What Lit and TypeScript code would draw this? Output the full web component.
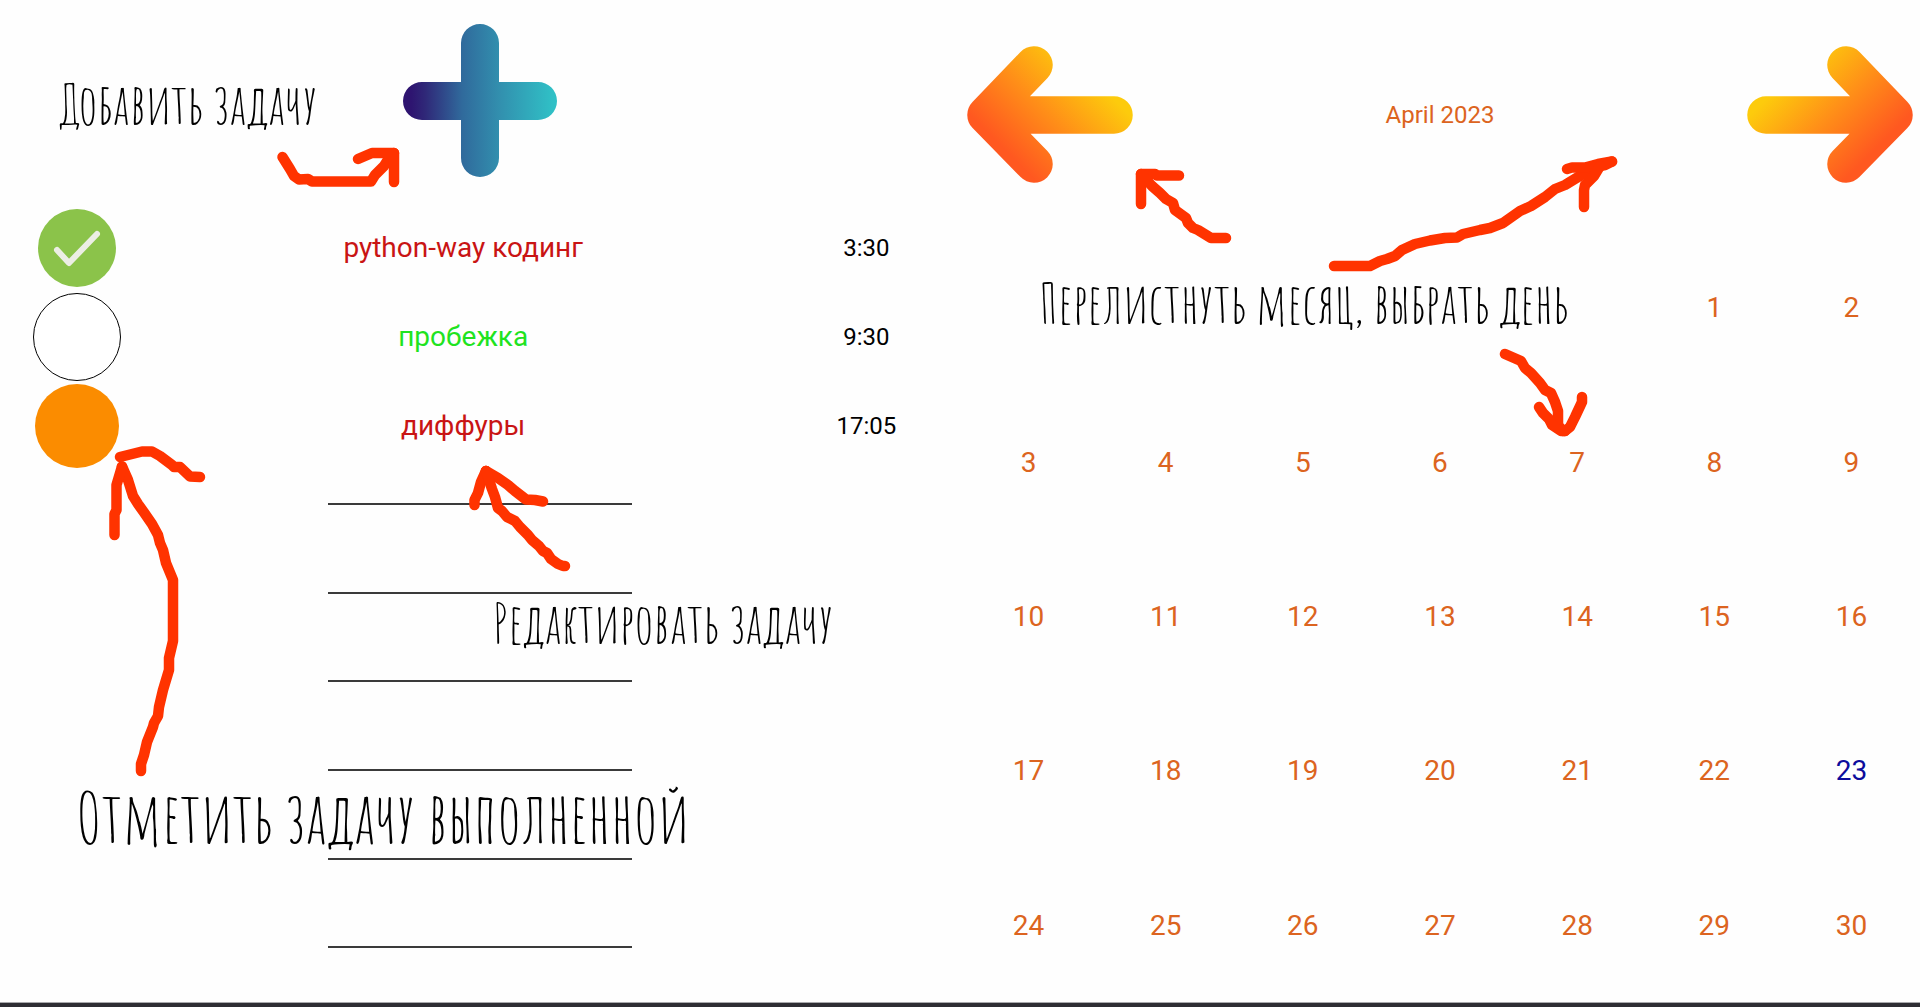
import { LitElement, html, svg, css, nothing } from "lit";
import { customElement, state } from "lit/decorators.js";
import { classMap } from "lit/directives/class-map.js";
import { styleMap } from "lit/directives/style-map.js";

interface Task {
  title: string;
  time: string;
  tone: "red" | "green";
  mark: "done" | "open" | "pending";
}

interface Note {
  text: string;
  x: number;
  y: number;
  large?: boolean;
}

const TASKS: Task[] = [
  { title: "python-way кодинг", time: "3:30", tone: "red", mark: "done" },
  { title: "пробежка", time: "9:30", tone: "green", mark: "open" },
  { title: "диффуры", time: "17:05", tone: "red", mark: "pending" },
];

const EMPTY_ROWS = 6;
const FIRST_WEEKDAY = 5;
const DAYS_IN_MONTH = 30;
const TODAY = 23;

/* Canvas on which the hand-drawn notes are placed. */
const CANVAS_W = 1920;
const CANVAS_H = 1007;

const NOTES: Note[] = [
  { text: "Добавить задачу", x: 60, y: 68 },
  { text: "Редактировать задачу", x: 493, y: 587 },
  { text: "Отметить задачу выполненной", x: 76, y: 772, large: true },
  { text: "Перелистнуть месяц, выбрать день", x: 1039, y: 267 },
];

const STROKES: string[] = [
  // add task
  "282.5,157 290,169 294,176 299,179.5 308,179 312,181.5 371,181.5 375,175 384,166 389,158 394,153",
  "358,159 372,153 394,153 394,182",
  // mark as done
  "120,457 142,451.5 152,451.5 160,456 172,465 174,467 180,467 190,476.5 200,477",
  "122,466.5 128,480 133,496 138,504 143,511 152,524 158,535 160,543 163,550 166,563 173,580 173,641 169,658 169,670 163,690 159,707 158,716 154,723 153,727 147,742 144,755 141,764 141,771",
  "122,466.5 116.5,485 116.5,510 114.5,514 114.5,535",
  // edit task
  "486,471 498,478 508,485 515,491 526,499.5 535,500 543,501.5",
  "486,471 481,482 478,493 474.5,500 474.5,505",
  "486,471 492,489 495,497 498,508 502,511 507,517 515,521 520,527 528,535 532,540 539,546 543,551 547,553 551,559 558,564 563,566 565,566",
  // previous month
  "1179,175.5 1157,175.5 1155,174 1141,174 1141,204",
  "1141,174 1152,186 1160,193 1166,199 1173,203 1175,210 1186,218 1188,223 1193,228 1198,230 1211,238 1226,238",
  // next month
  "1334,266 1370,266 1380,261 1387,259 1395,256 1402,250 1415,244 1430,240.5 1445,238 1457,237.5 1463,234 1480,230 1490,228 1503,223 1520,211 1531,206 1545,197 1555,189 1565,185 1583,174 1600,166 1605,165 1612,161.5",
  "1567,169 1572,167.5 1585,167.5 1598,164 1612,161.5",
  "1600,166 1594,176 1585,185 1584,190 1584,207",
  // pick a day
  "1505,354 1521,361 1525,368 1531,373 1540,383 1545,390 1551,393 1555,402 1558,411 1558,425 1563,431",
  "1539,407 1543,413 1549,419 1552,425 1561,431 1565,431",
  "1582,397 1582,402 1575,417 1570,427 1565,431",
];

@customElement("app-root")
export class AppRoot extends LitElement {
  static styles = css`
    :host {
      display: block;
      font-family: Roboto, "Noto Sans", sans-serif;
      color: #000;
    }
    *,
    *::before,
    *::after {
      box-sizing: border-box;
    }
    button {
      border: 0;
      padding: 0;
      margin: 0;
      background: none;
      font: inherit;
      color: inherit;
      cursor: pointer;
    }
    svg {
      display: block;
    }
    .page {
      position: relative;
      min-height: 100vh;
      display: flex;
      flex-direction: column;
      background: #fefefe;
    }
    .panes {
      flex: 1;
      display: grid;
      grid-template-columns: 1fr 1fr;
    }
    .tasks,
    .calendar {
      display: flex;
      flex-direction: column;
    }
    .toolbar {
      height: 204px;
      display: flex;
      justify-content: center;
      align-items: flex-start;
      padding-top: 24px;
    }
    .list {
      flex: 1;
      margin: 0;
      padding: 0;
      list-style: none;
      display: grid;
      grid-auto-rows: 1fr;
    }
    .task {
      display: grid;
      grid-template-columns: 32fr 129fr 39fr;
      align-items: center;
      justify-items: center;
    }
    .blank {
      display: flex;
      justify-content: center;
      align-items: flex-start;
    }
    .title {
      font-size: 28px;
      line-height: 32px;
    }
    .red {
      color: #c91414;
    }
    .green {
      color: #1fe31f;
    }
    .time {
      font-size: 24px;
      line-height: 32px;
    }
    .mark {
      display: grid;
      place-items: center;
    }
    .mark > * {
      grid-area: 1 / 1;
    }
    .box {
      appearance: none;
      margin: 0;
      border-radius: 50%;
    }
    .done {
      width: 78px;
      height: 78px;
      background: #8bc34a;
    }
    .open {
      width: 88px;
      height: 88px;
      border: 1px solid #000;
      background: #fff;
    }
    .pending {
      width: 84px;
      height: 84px;
      background: #fb8c00;
    }
    .tick {
      pointer-events: none;
    }
    .entry {
      width: 304px;
      height: 35px;
      padding: 0;
      border: 0;
      border-bottom: 2px solid #3a3a3a;
      border-radius: 0;
      outline: 0;
      background: none;
      font: inherit;
      font-size: 24px;
      text-align: center;
    }
    .head {
      height: 230px;
      padding: 0 7px;
      display: flex;
      justify-content: space-between;
      align-items: center;
    }
    .month {
      margin: 0;
      font-size: 24px;
      line-height: 32px;
      font-weight: 400;
      color: #dc6420;
    }
    .days {
      flex: 1;
      display: grid;
      grid-template-columns: repeat(7, 1fr);
      grid-auto-rows: 1fr;
      font-size: 28px;
      line-height: 32px;
      color: #dc6420;
    }
    .day {
      padding-top: 2px;
    }
    .today {
      color: #0c0c9c;
    }
    .bar {
      height: 5px;
      border-top: 1px solid #a9a9ac;
      background: #2e2d33;
    }
    .overlay {
      position: absolute;
      inset: 0;
      pointer-events: none;
    }
    .ink {
      width: 100%;
      height: 100%;
      fill: none;
      stroke: #ff3300;
      stroke-width: 10.5;
      stroke-linecap: round;
      stroke-linejoin: round;
    }
    .note {
      position: absolute;
      margin: 0;
      font-family: "Amatic SC", "Roboto Condensed", sans-serif;
      font-size: 56px;
      line-height: 72px;
      white-space: nowrap;
    }
    .large {
      font-size: 70px;
      line-height: 90px;
    }
  `;

  @state() private marks: boolean[] = TASKS.map((t) => t.mark === "done");

  private toggle(index: number) {
    this.marks = this.marks.map((m, i) => (i === index ? !m : m));
  }

  private plusIcon() {
    return html`<svg width="154" height="154" viewBox="0 0 154 154" aria-hidden="true">
      <defs>
        <linearGradient id="plus" gradientUnits="userSpaceOnUse" x1="8" y1="0" x2="150" y2="0">
          <stop offset="0" stop-color="#2e1470" />
          <stop offset="0.1" stop-color="#2f2878" />
          <stop offset="0.36" stop-color="#306a9c" />
          <stop offset="0.62" stop-color="#328fae" />
          <stop offset="1" stop-color="#30c0c6" />
        </linearGradient>
      </defs>
      <path
        fill="url(#plus)"
        d="M58 19a19 19 0 0 1 38 0V58h39a19 19 0 0 1 0 38H96v38a19 19 0 0 1-38 0V96H19a19 19 0 0 1 0-38H58z"
      />
    </svg>`;
  }

  private arrowIcon(next: boolean) {
    const id = next ? "next" : "prev";
    return html`<svg width="166" height="138" viewBox="0 0 166 138" aria-hidden="true">
      <defs>
        <linearGradient id=${id} gradientUnits="userSpaceOnUse" x1="18" y1="84" x2="98" y2="4">
          <stop offset="0" stop-color="#ff5820" />
          <stop offset="0.5" stop-color="#ff8f18" />
          <stop offset="1" stop-color="#fdcb0c" />
        </linearGradient>
      </defs>
      <g transform=${next ? "translate(166 0) scale(-1 1)" : "translate(0 0)"}>
        <path
          d="M67 19 19 69l48 49M24 69H147"
          fill="none"
          stroke="url(#${id})"
          stroke-width="37.5"
          stroke-linecap="round"
          stroke-linejoin="round"
        />
      </g>
    </svg>`;
  }

  private renderTask(task: Task, index: number) {
    return html`<li class="task">
      <label class="mark">
        <input
          class=${classMap({ box: true, [task.mark]: true })}
          type="checkbox"
          aria-label=${task.title}
          .checked=${this.marks[index]}
          @change=${() => this.toggle(index)}
        />
        ${task.mark === "done"
          ? html`<svg class="tick" width="78" height="78" viewBox="0 0 78 78" aria-hidden="true">
              <path
                d="M19 41 31 54 59 25"
                fill="none"
                stroke="#eceee4"
                stroke-width="6"
                stroke-linecap="round"
                stroke-linejoin="round"
              />
            </svg>`
          : nothing}
      </label>
      <button class=${classMap({ title: true, [task.tone]: true })}>${task.title}</button>
      <time class="time">${task.time}</time>
    </li>`;
  }

  render() {
    const blanks = Array.from({ length: EMPTY_ROWS }, (_, i) => i + TASKS.length + 1);
    const gaps = Array.from({ length: FIRST_WEEKDAY });
    const days = Array.from({ length: DAYS_IN_MONTH }, (_, i) => i + 1);
    return html`<div class="page">
      <main class="panes">
        <section class="tasks">
          <div class="toolbar"><button aria-label="Добавить задачу">${this.plusIcon()}</button></div>
          <ul class="list">
            ${TASKS.map((t, i) => this.renderTask(t, i))}
            ${blanks.map(
              (n) => html`<li class="blank"><input class="entry" type="text" aria-label="Задача ${n}" /></li>`
            )}
          </ul>
        </section>
        <section class="calendar">
          <header class="head">
            <button aria-label="Предыдущий месяц">${this.arrowIcon(false)}</button>
            <h2 class="month">April 2023</h2>
            <button aria-label="Следующий месяц">${this.arrowIcon(true)}</button>
          </header>
          <div class="days">
            ${gaps.map(() => html`<span></span>`)}
            ${days.map((d) => html`<button class=${classMap({ day: true, today: d === TODAY })}>${d}</button>`)}
          </div>
        </section>
      </main>
      <footer class="bar"></footer>
      <div class="overlay">
        <svg class="ink" viewBox="0 0 ${CANVAS_W} ${CANVAS_H}" preserveAspectRatio="none" aria-hidden="true">
          ${STROKES.map((points) => svg`<polyline points=${points} />`)}
        </svg>
        ${NOTES.map(
          (n) => html`<p
            class=${classMap({ note: true, large: !!n.large })}
            style=${styleMap({
              left: `${(n.x / CANVAS_W) * 100}%`,
              top: `${(n.y / CANVAS_H) * 100}%`,
            })}
          >${n.text}</p>`
        )}
      </div>
    </div>`;
  }
}
